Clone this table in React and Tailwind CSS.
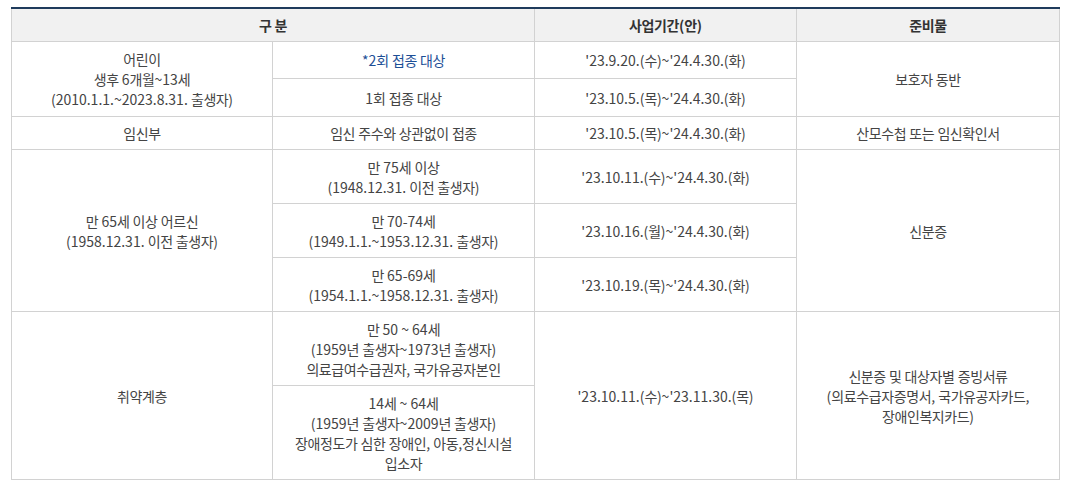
// Hangul runs are pulled in slightly so line widths follow the reference font
function Txt({ text }) {
    return text.split(/([가-힣]+)/).map((part, i) =>
        /[가-힣]/.test(part) ? (
            <span key={i} className="tracking-[-0.4px]">{part}</span>
        ) : (
            part
        )
    )
}

function Cell({ lines, className = '', ...rest }) {
    return (
        <td className={`border border-[#d2d2d2] px-1 py-[6px] text-center align-middle whitespace-nowrap ${className}`} {...rest}>
            {lines.map((line, i) => (
                <div key={i}>
                    <Txt text={line} />
                </div>
            ))}
        </td>
    )
}

function Head({ text, ...rest }) {
    return (
        <th className="border border-t-0 border-[#d2d2d2] py-[6px] font-bold text-[#333]" {...rest}>
            <Txt text={text} />
        </th>
    )
}

function App() {
    return (
        <div className="min-h-screen bg-white pl-[11px] pt-[7px] font-['Noto_Sans_CJK_KR','Noto_Sans',sans-serif] text-[14px] leading-[20px] text-[#444]">
            <table className="w-[1048px] table-fixed border-collapse border-t-2 border-t-[#1f3b5c]">
                <colgroup>
                    <col className="w-[261px]" />
                    <col className="w-[262px]" />
                    <col className="w-[262px]" />
                    <col className="w-[263px]" />
                </colgroup>
                <thead>
                    <tr className="bg-[#f1f1f1]">
                        <Head colSpan={2} text="구 분" />
                        <Head text="사업기간(안)" />
                        <Head text="준비물" />
                    </tr>
                </thead>
                <tbody>
                    <tr className="h-[37px]">
                        <Cell rowSpan={2} lines={['어린이', '생후 6개월~13세', '(2010.1.1.~2023.8.31. 출생자)']} />
                        <Cell className="text-[#1d4f96]" lines={['*2회 접종 대상']} />
                        <Cell lines={["'23.9.20.(수)~'24.4.30.(화)"]} />
                        <Cell rowSpan={2} lines={['보호자 동반']} />
                    </tr>
                    <tr className="h-[38px]">
                        <Cell lines={['1회 접종 대상']} />
                        <Cell lines={["'23.10.5.(목)~'24.4.30.(화)"]} />
                    </tr>
                    <tr className="h-[33px]">
                        <Cell lines={['임신부']} />
                        <Cell lines={['임신 주수와 상관없이 접종']} />
                        <Cell lines={["'23.10.5.(목)~'24.4.30.(화)"]} />
                        <Cell lines={['산모수첩 또는 임신확인서']} />
                    </tr>
                    <tr className="h-[54px]">
                        <Cell rowSpan={3} lines={['만 65세 이상 어르신', '(1958.12.31. 이전 출생자)']} />
                        <Cell lines={['만 75세 이상', '(1948.12.31. 이전 출생자)']} />
                        <Cell lines={["'23.10.11.(수)~'24.4.30.(화)"]} />
                        <Cell rowSpan={3} lines={['신분증']} />
                    </tr>
                    <tr className="h-[54px]">
                        <Cell lines={['만 70-74세', '(1949.1.1.~1953.12.31. 출생자)']} />
                        <Cell lines={["'23.10.16.(월)~'24.4.30.(화)"]} />
                    </tr>
                    <tr className="h-[54px]">
                        <Cell lines={['만 65-69세', '(1954.1.1.~1958.12.31. 출생자)']} />
                        <Cell lines={["'23.10.19.(목)~'24.4.30.(화)"]} />
                    </tr>
                    <tr className="h-[74px]">
                        <Cell rowSpan={2} lines={['취약계층']} />
                        <Cell lines={['만 50 ~ 64세', '(1959년 출생자~1973년 출생자)', '의료급여수급권자, 국가유공자본인']} />
                        <Cell rowSpan={2} lines={["'23.10.11.(수)~'23.11.30.(목)"]} />
                        <Cell rowSpan={2} lines={['신분증 및 대상자별 증빙서류', '(의료수급자증명서, 국가유공자카드,', '장애인복지카드)']} />
                    </tr>
                    <tr className="h-[94px]">
                        <Cell lines={['14세 ~ 64세', '(1959년 출생자~2009년 출생자)', '장애정도가 심한 장애인, 아동,정신시설', '입소자']} />
                    </tr>
                </tbody>
            </table>
        </div>
    )
}

export default App
